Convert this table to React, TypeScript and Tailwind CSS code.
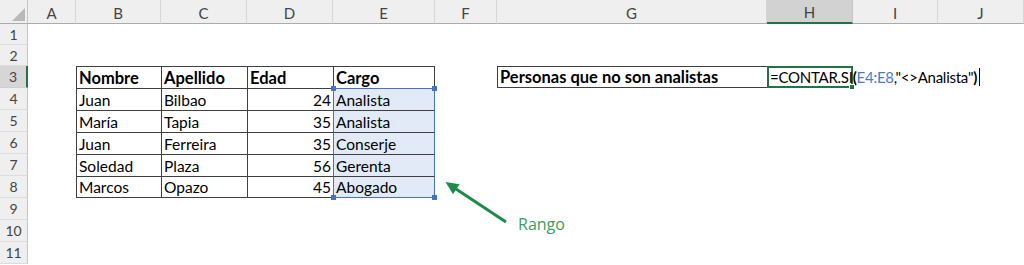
import React from "react";

const COLS = ["A", "B", "C", "D", "E", "F", "G", "H", "I", "J"];

const DATA: string[][] = [
  ["Nombre", "Apellido", "Edad", "Cargo"],
  ["Juan", "Bilbao", "24", "Analista"],
  ["María", "Tapia", "35", "Analista"],
  ["Juan", "Ferreira", "35", "Conserje"],
  ["Soledad", "Plaza", "56", "Gerenta"],
  ["Marcos", "Opazo", "45", "Abogado"],
];

function ColHeader({ label }: { label: string }) {
  if (label === "H") {
    return (
      <div className="flex items-center justify-center pt-[3px] bg-[#d2d2d2] border-r border-r-[#c4c4c4] border-b-2 border-b-[#217346] text-[#444] text-[15px]">
        {label}
      </div>
    );
  }
  return (
    <div className="flex items-center justify-center pt-[3px] bg-[#efefef] border-r border-r-[#d6d6d6] border-b border-b-[#ababab] text-[#444] text-[15px]">
      {label}
    </div>
  );
}

function RowHeader({ n }: { n: number }) {
  if (n === 3) {
    return (
      <div className="flex items-center justify-center bg-[#d6d6d6] border-r-2 border-r-[#217346] border-b border-b-[#cfcfcf] text-[#444] text-[14px]">
        {n}
      </div>
    );
  }
  return (
    <div className="flex items-center justify-center bg-[#efefef] border-r border-r-[#c6c6c6] border-b border-b-[#dcdcdc] text-[#444] text-[14px]">
      {n}
    </div>
  );
}

function TableCell({ r, c }: { r: number; c: number }) {
  const text = DATA[r - 3][c];
  if (c < 3) {
    let cls =
      "flex items-end px-[2px] pb-[1px] leading-[18px] whitespace-nowrap border-l border-t border-l-[#3f3f3f] border-t-[#3f3f3f]";
    if (r === 8) cls += " border-b border-b-[#3f3f3f]";
    if (c === 2 && r !== 3) cls += " justify-end";
    if (r === 3) cls += " font-bold text-[16.5px]";
    return <div className={cls}>{text}</div>;
  }
  if (r === 3) {
    return (
      <div className="flex items-end px-[2px] pb-[1px] leading-[18px] whitespace-nowrap font-bold text-[16.5px] border-l border-t border-r border-l-[#3f3f3f] border-t-[#3f3f3f] border-r-[#3f3f3f]">
        {text}
      </div>
    );
  }
  let cls =
    "relative flex items-end px-[2px] pb-[1px] leading-[18px] whitespace-nowrap bg-[#e1eaf6] border-l border-r border-t border-l-[#4472c4] border-r-[#4472c4]";
  cls += r === 4 ? " border-t-[#4472c4]" : " border-t-[#3f3f3f]";
  if (r === 8) cls += " border-b border-b-[#4472c4]";
  return (
    <div className={cls}>
      {text}
      {r === 4 && (
        <>
          <span className="absolute -left-[3px] -top-[3px] w-[5px] h-[5px] bg-[#4472c4]" />
          <span className="absolute -right-[3px] -top-[3px] w-[5px] h-[5px] bg-[#4472c4]" />
        </>
      )}
      {r === 8 && (
        <>
          <span className="absolute -left-[3px] -bottom-[3px] w-[5px] h-[5px] bg-[#4472c4]" />
          <span className="absolute -right-[3px] -bottom-[3px] w-[5px] h-[5px] bg-[#4472c4]" />
        </>
      )}
    </div>
  );
}

function Row({ n }: { n: number }) {
  const cells: React.ReactNode[] = [];
  cells.push(<RowHeader key="h" n={n} />);
  COLS.forEach((col, ci) => {
    const key = col + n;
    if (n >= 3 && n <= 8 && ci >= 1 && ci <= 4) {
      cells.push(<TableCell key={key} r={n} c={ci - 1} />);
    } else if (n === 3 && col === "G") {
      cells.push(
        <div
          key={key}
          className="flex items-end px-[2px] pb-[1px] leading-[18px] whitespace-nowrap font-bold text-[16.5px] border-l border-t border-b border-l-[#3f3f3f] border-t-[#3f3f3f] border-b-[#3f3f3f]"
        >
          Personas que no son analistas
        </div>
      );
    } else if (n === 3 && col === "H") {
      cells.push(
        <div
          key={key}
          className="relative z-10 flex items-end pl-[1px] leading-[18px] whitespace-nowrap text-[15px] tracking-[-0.25px] border-2 border-[#217346]"
        >
          <span className="shrink-0 flex items-center">
            <span>=CONTAR.SI</span>
            <span className="font-bold">(</span>
            <span className="text-[#4a7cc6]">E4:E8</span>
            <span>,"&lt;&gt;Analista"</span>
            <span className="font-bold">)</span>
            <span className="inline-block w-[1px] h-[18px] bg-black ml-[2px]" />
          </span>
          <span className="absolute -right-[4px] -bottom-[4px] w-[6px] h-[6px] bg-[#217346] border border-white" />
        </div>
      );
    } else {
      cells.push(<div key={key} />);
    }
  });
  return <>{cells}</>;
}

export default function App() {
  const rows = [1, 2, 3, 4, 5, 6, 7, 8, 9, 10, 11];
  return (
    <div className="relative w-[1024px] h-[265px] overflow-hidden bg-white font-['Lato',sans-serif] text-[15.5px] text-black">
      <div className="grid grid-cols-[28px_48px_85px_86px_86px_102px_62px_270px_86px_85px_1fr] grid-rows-[24px_21px_21px_repeat(9,22px)]">
        <div className="relative bg-[#efefef] border-r border-r-[#c6c6c6] border-b border-b-[#ababab]">
          <svg className="absolute left-0 top-0" width="28" height="24">
            <polygon points="25,8 25,21 12,21" fill="#b9b9b9" />
          </svg>
        </div>
        {COLS.map((c) => (
          <ColHeader key={c} label={c} />
        ))}
        {rows.map((n) => (
          <Row key={n} n={n} />
        ))}
      </div>
      <svg className="absolute left-0 top-0 pointer-events-none" width="1024" height="265">
        <line x1="506" y1="222" x2="456" y2="189" stroke="#1e8b4a" strokeWidth="3" />
        <polygon points="445.5,182 459.6,184.2 453,194.2" fill="#1e8b4a" />
      </svg>
      <div className="absolute left-[518px] top-[216px] font-['Open_Sans',sans-serif] text-[16px] leading-none text-[#3c9c5c]">
        Rango
      </div>
    </div>
  );
}
